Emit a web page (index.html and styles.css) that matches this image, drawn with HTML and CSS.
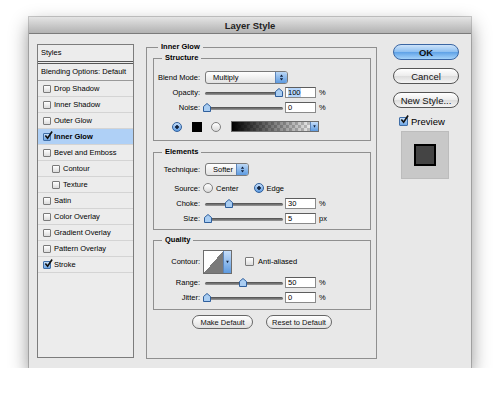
FILE: index.html
```html
<!DOCTYPE html>
<html lang="en">
<head>
    <meta charset="UTF-8">
    <title>Layer Style</title>
    <link rel="stylesheet" href="styles.css">
</head>
<body>
    <div class="window">
        <div class="titlebar">Layer Style</div>
        <div class="content">
            <!-- left: list of effects -->
            <div class="styles-list">
                <div class="list-head">Styles</div>
                <div class="list-blend">Blending Options: Default</div>
                <div class="list-item"><span class="check"></span>Drop Shadow</div>
                <div class="list-item"><span class="check"></span>Inner Shadow</div>
                <div class="list-item"><span class="check"></span>Outer Glow</div>
                <div class="list-item selected"><span class="check on"><svg viewBox="0 0 10 10"><path d="M1.5 5 L4 8 L9 0.5"/></svg></span>Inner Glow</div>
                <div class="list-item"><span class="check"></span>Bevel and Emboss</div>
                <div class="list-item sub"><span class="check"></span>Contour</div>
                <div class="list-item sub"><span class="check"></span>Texture</div>
                <div class="list-item"><span class="check"></span>Satin</div>
                <div class="list-item"><span class="check"></span>Color Overlay</div>
                <div class="list-item"><span class="check"></span>Gradient Overlay</div>
                <div class="list-item"><span class="check"></span>Pattern Overlay</div>
                <div class="list-item"><span class="check on"><svg viewBox="0 0 10 10"><path d="M1.5 5 L4 8 L9 0.5"/></svg></span>Stroke</div>
            </div>

            <!-- middle: settings -->
            <fieldset class="panel">
                <legend>Inner Glow</legend>

                <fieldset class="group structure">
                    <legend>Structure</legend>
                    <div class="row">
                        <span class="lbl">Blend Mode:</span>
                        <div class="select blend"><span>Multiply</span><span class="stepper"><svg viewBox="0 0 12 13"><path d="M4 5.5 L6 3 L8 5.5 Z M4 7.5 L6 10 L8 7.5 Z"/></svg></span></div>
                    </div>
                    <div class="row">
                        <span class="lbl">Opacity:</span>
                        <div class="slider"><span class="thumb" style="left: 72px"><svg viewBox="0 0 8 9"><path d="M4 0.5 L7.5 3.5 L7.5 8.5 L0.5 8.5 L0.5 3.5 Z"/></svg></span></div>
                        <span class="field hilite"><span>100</span></span><span class="unit">%</span>
                    </div>
                    <div class="row">
                        <span class="lbl">Noise:</span>
                        <div class="slider"><span class="thumb" style="left: 0px"><svg viewBox="0 0 8 9"><path d="M4 0.5 L7.5 3.5 L7.5 8.5 L0.5 8.5 L0.5 3.5 Z"/></svg></span></div>
                        <span class="field">0</span><span class="unit">%</span>
                    </div>
                    <div class="row color-row">
                        <span class="radio on"></span>
                        <span class="swatch"></span>
                        <span class="radio"></span>
                        <div class="gradient"><span class="drop"><svg viewBox="0 0 8 11"><path d="M2.5 4 L5.5 4 L4 7 Z"/></svg></span></div>
                    </div>
                </fieldset>

                <fieldset class="group elements">
                    <legend>Elements</legend>
                    <div class="row short">
                        <span class="lbl">Technique:</span>
                        <div class="select technique"><span>Softer</span><span class="stepper"><svg viewBox="0 0 12 13"><path d="M4 5.5 L6 3 L8 5.5 Z M4 7.5 L6 10 L8 7.5 Z"/></svg></span></div>
                    </div>
                    <div class="row source">
                        <span class="lbl">Source:</span>
                        <span class="radio"></span><span class="opt">Center</span>
                        <span class="radio on"></span><span class="opt">Edge</span>
                    </div>
                    <div class="row">
                        <span class="lbl">Choke:</span>
                        <div class="slider"><span class="thumb" style="left: 22px"><svg viewBox="0 0 8 9"><path d="M4 0.5 L7.5 3.5 L7.5 8.5 L0.5 8.5 L0.5 3.5 Z"/></svg></span></div>
                        <span class="field">30</span><span class="unit">%</span>
                    </div>
                    <div class="row">
                        <span class="lbl">Size:</span>
                        <div class="slider"><span class="thumb" style="left: 1px"><svg viewBox="0 0 8 9"><path d="M4 0.5 L7.5 3.5 L7.5 8.5 L0.5 8.5 L0.5 3.5 Z"/></svg></span></div>
                        <span class="field">5</span><span class="unit">px</span>
                    </div>
                </fieldset>

                <fieldset class="group quality">
                    <legend>Quality</legend>
                    <div class="row tall">
                        <span class="lbl">Contour:</span>
                        <div class="contour"><span class="curve"></span><span class="drop"><svg viewBox="0 0 8 21"><path d="M2.5 9 L5.5 9 L4 12 Z"/></svg></span></div>
                        <span class="check"></span><span class="opt">Anti-aliased</span>
                    </div>
                    <div class="row">
                        <span class="lbl">Range:</span>
                        <div class="slider"><span class="thumb" style="left: 36px"><svg viewBox="0 0 8 9"><path d="M4 0.5 L7.5 3.5 L7.5 8.5 L0.5 8.5 L0.5 3.5 Z"/></svg></span></div>
                        <span class="field">50</span><span class="unit">%</span>
                    </div>
                    <div class="row">
                        <span class="lbl">Jitter:</span>
                        <div class="slider"><span class="thumb" style="left: 0px"><svg viewBox="0 0 8 9"><path d="M4 0.5 L7.5 3.5 L7.5 8.5 L0.5 8.5 L0.5 3.5 Z"/></svg></span></div>
                        <span class="field">0</span><span class="unit">%</span>
                    </div>
                </fieldset>

                <div class="defaults">
                    <button class="pill make">Make Default</button>
                    <button class="pill reset">Reset to Default</button>
                </div>
            </fieldset>

            <!-- right: dialog buttons -->
            <div class="actions">
                <button class="btn primary">OK</button>
                <button class="btn">Cancel</button>
                <button class="btn">New Style...</button>
                <div class="preview-row"><span class="check on big"><svg viewBox="0 0 10 10"><path d="M1.5 5 L4 8 L9 0.5"/></svg></span>Preview</div>
                <div class="preview"><span class="preview-square"></span></div>
            </div>
        </div>
    </div>
</body>
</html>
```

FILE: styles.css
```css
body {
    margin: 0;
    background: #fff;
    font-family: "Liberation Sans", Arial, sans-serif;
    font-size: 7.5px;
    color: #000;
}
.window {
    margin: 17px 0 0 29px;
    width: 442px;
    height: 351px;
    background: #e8e8e8;
    box-shadow: 0 8px 18px rgba(0, 0, 0, 0.45), 0 0 0 1px rgba(0, 0, 0, 0.2);
}
.titlebar {
    height: 16px;
    line-height: 17px;
    text-align: center;
    font-size: 9.5px;
    font-weight: bold;
    color: #222;
    background: linear-gradient(#e4e4e4, #b2b2b2);
    border-bottom: 1px solid #7b7b7b;
}
.content {
    display: flex;
    align-items: flex-start;
    padding: 10px 12px 0 8px;
}

/* effects list */
.styles-list {
    width: 97px;
    height: 314px;
    box-sizing: border-box;
    border: 1px solid #7c7c7c;
    background: #ececec;
}
.list-head, .list-blend {
    height: 16px;
    line-height: 16px;
    padding-left: 3px;
}
.list-head { border-bottom: 3px double #555; }
.list-blend { border-bottom: 1px solid #9a9a9a; }
.list-item {
    height: 15px;
    display: flex;
    align-items: center;
    padding-left: 5px;
    border-bottom: 1px solid #d4d4d4;
}
.list-item.sub { padding-left: 14px; }
.list-item.selected {
    background: #afd0f6;
    font-weight: bold;
}
.check {
    position: relative;
    width: 6px;
    height: 6px;
    margin-right: 3px;
    border: 1px solid #7a7a7a;
    border-radius: 1px;
    background: linear-gradient(#fff, #dcdcdc);
    flex: none;
}
.check.on {
    background: linear-gradient(#c7e0fb, #6fa6e4);
    border-color: #3f6ea8;
}
.check svg {
    position: absolute;
    left: 0;
    top: -3px;
    width: 9px;
    height: 9px;
    fill: none;
    stroke: #111;
    stroke-width: 1.8;
}

/* settings panel */
fieldset {
    margin: 0;
    min-width: 0;
    border: 1px solid #8f8f8f;
}
legend {
    font-weight: bold;
    line-height: 10px;
    padding: 0 3px;
}
.panel {
    width: 231px;
    box-sizing: border-box;
    margin: -2px 0 0 12px;
    padding: 0 5px 29px 6px;
}
.panel > legend { margin-left: 5px; }
.group {
    padding: 0 4px;
}
.group > legend { margin-left: 4px; }
.structure { margin-top: 1px; padding-top: 7px; padding-bottom: 8px; }
.elements { margin-top: 6px; padding-top: 6px; padding-bottom: 4px; }
.quality { margin-top: 5px; padding-top: 5px; padding-bottom: 5px; }

.row {
    display: flex;
    align-items: center;
    height: 14px;
    margin-top: 1px;
    white-space: nowrap;
}
.row:first-of-type { margin-top: 0; }
.row.short { height: 12px; }
.row.tall { height: 23px; }
.row.source { margin-top: 6px; }
.quality .row + .row { margin-top: 2px; }
.quality .row + .row + .row { margin-top: 1px; }
.lbl {
    width: 42px;
    display: flex;
    justify-content: flex-end;
    flex: none;
}

.select {
    display: flex;
    align-items: center;
    justify-content: space-between;
    height: 11px;
    margin-left: 5px;
    border: 1px solid #7a7a7a;
    border-radius: 3px;
    background: linear-gradient(#fff, #e2e2e2);
    overflow: hidden;
}
.select span:first-child { padding-left: 7px; }
.blend { width: 81px; }
.technique { width: 42px; }
.stepper {
    width: 11px;
    height: 11px;
    background: linear-gradient(#bcd8f6, #5c9ae0);
    border-left: 1px solid #5d86bb;
}
.stepper svg { display: block; width: 11px; height: 11px; fill: #10213d; }

.slider {
    position: relative;
    width: 80px;
    height: 9px;
    margin-left: 3px;
}
.slider::before {
    content: "";
    position: absolute;
    left: 2px;
    right: 0;
    top: 4px;
    height: 3px;
    border-radius: 2px;
    background: linear-gradient(#4c4c4c, #9b9b9b);
}
.thumb {
    position: absolute;
    top: 0;
    width: 8px;
    height: 9px;
}
.thumb svg {
    display: block;
    width: 8px;
    height: 9px;
    fill: #a9cdf2;
    stroke: #2f5f9c;
    stroke-width: 1;
}
.field {
    width: 27px;
    height: 9px;
    line-height: 9px;
    margin-left: 2px;
    padding-left: 2px;
    background: #fff;
    border: 1px solid #8a8a8a;
    border-top-color: #5d5d5d;
    flex: none;
}
.field.hilite span { background: #b5d5fb; }
.unit { margin-left: 3px; }

.color-row {
    height: 11px;
    margin-top: 7px;
    padding-left: 14px;
}
.radio {
    width: 8px;
    height: 8px;
    border-radius: 50%;
    border: 1px solid #808080;
    background: linear-gradient(#fff, #dadada);
    flex: none;
}
.radio.on {
    border-color: #2f5f9c;
    background: radial-gradient(circle, #12233e 0 1.5px, transparent 2px), linear-gradient(#c6defa, #5e9be0);
}
.swatch {
    width: 10px;
    height: 10px;
    margin: 0 9px 0 10px;
    background: #000;
}
.gradient {
    width: 86px;
    height: 9px;
    margin-left: 10px;
    border: 1px solid #6d6d6d;
    display: flex;
    justify-content: flex-end;
    background:
        linear-gradient(to right, #000, rgba(0, 0, 0, 0)),
        repeating-conic-gradient(#cfcfcf 0 25%, #fff 0 50%) 0 0 / 6px 6px;
}
.drop {
    width: 7px;
    background: linear-gradient(#c6defa, #5e9be0);
    border-left: 1px solid #5d86bb;
}
.drop svg { display: block; width: 7px; height: 100%; fill: #10213d; }

.source .radio { margin-left: 3px; }
.opt { margin-left: 3px; }
.source .opt:nth-of-type(3) { margin-right: 12px; }

.contour {
    display: flex;
    width: 27px;
    height: 22px;
    margin-left: 3px;
    border: 1px solid #6d6d6d;
    background: #fff;
}
.curve {
    flex: 1;
    background: linear-gradient(to top left, #7a7a7a 50%, #fff 50%);
}
.quality .check { margin-left: 13px; width: 7px; height: 7px; }
.quality .check + .opt { margin-left: 1px; }

.defaults {
    display: flex;
    justify-content: center;
    gap: 13px;
    margin-top: 5px;
}
button {
    font-family: inherit;
    color: #111;
    cursor: pointer;
}
.pill {
    height: 14px;
    padding: 0;
    font-size: 7.5px;
    border: 1px solid #666;
    border-radius: 7px;
    background: linear-gradient(#fff, #e0e0e0);
}
.pill.make { width: 61px; }
.pill.reset { width: 66px; }

/* dialog buttons */
.actions {
    width: 66px;
    margin-left: 16px;
    display: flex;
    flex-direction: column;
}
.btn {
    height: 16px;
    margin-bottom: 8px;
    padding: 0;
    font-size: 9.5px;
    border: 1px solid #555;
    border-radius: 8px;
    background: linear-gradient(#fff 0%, #ececec 50%, #dcdcdc 51%, #f4f4f4 100%);
}
.btn.primary {
    font-weight: bold;
    border-color: #3a66a3;
    background: linear-gradient(#cde3fa 0%, #8dbff0 50%, #5ea1e6 51%, #a5d3fa 100%);
}
.preview-row {
    display: flex;
    align-items: center;
    height: 10px;
    padding-left: 6px;
    font-size: 9.5px;
}
.check.big { width: 7px; height: 7px; }
.preview {
    display: flex;
    align-items: center;
    justify-content: center;
    width: 48px;
    height: 48px;
    margin: 5px 0 0 8px;
    background: #c8c8c8;
    border: 1px solid #bcbcbc;
    box-sizing: border-box;
}
.preview-square {
    width: 18px;
    height: 18px;
    background: #444;
    border: 2px solid #000;
}
```
